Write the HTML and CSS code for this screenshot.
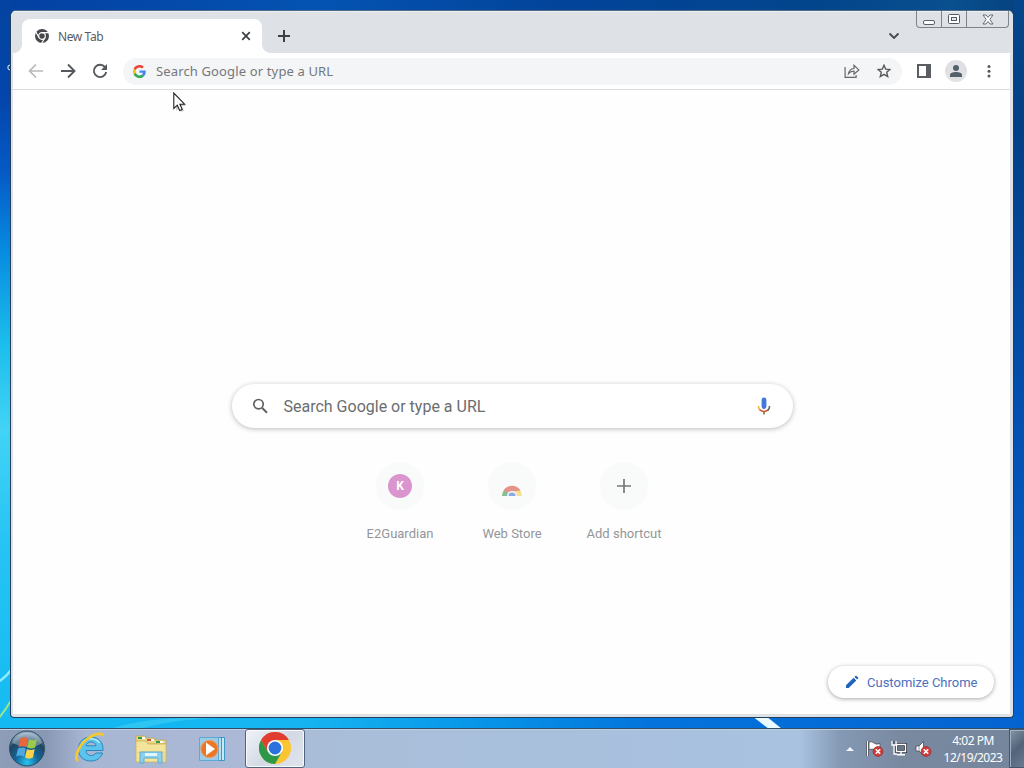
FILE: index.html
```
<!DOCTYPE html>
<html lang="en">
<head>
  <meta charset="UTF-8" />
  <title>New Tab</title>
  <link rel="stylesheet" href="styles.css">
</head>
<body>
  <div class="desktop">
    <svg class="wallpaper" width="1024" height="768" viewBox="0 0 1024 768">
      <path d="M-2 682Q5 678 12 669" fill="none" stroke="#8cecff" stroke-width="2.5" />
      <path d="M-2 719Q5 711 12 699" fill="none" stroke="#9be58a" stroke-width="2" />
      <path d="M752 716h14l16 13h-13z" fill="#eafaff" />
      <path d="M110 729q30-10 75-11h30q-45 2-75 11z" fill="#3fcdf4" opacity=".6" />
      <path d="M10 65q-3 0-2 4l2 1" fill="none" stroke="#dceaff" />
    </svg>

    <div class="window">
      <div class="tab-strip">
        <div class="tab">
          <svg width="14" height="14" viewBox="0 0 16 16">
            <circle cx="8" cy="8" r="8" fill="#45494d" />
            <circle cx="8" cy="8" r="3.8" fill="none" stroke="#fff" stroke-width="1.3" />
            <path d="M8 4.200h7.500M4.700 9.900L1 3.500M11.300 9.900L7.600 16.300" stroke="#fff" stroke-width="1.300" />
          </svg>
          <span class="tab-title">New Tab</span>
          <svg class="tab-close" width="10" height="10" viewBox="0 0 10 10">
            <path d="M1.200 1.200l7.600 7.600M8.800 1.200L1.200 8.800" stroke="#3c4043" stroke-width="1.700" />
          </svg>
        </div>
        <svg class="new-tab" width="12" height="12" viewBox="0 0 12 12">
          <path d="M6 0v12M0 6h12" stroke="#3c4043" stroke-width="2" />
        </svg>
        <svg class="tab-search" width="12" height="8" viewBox="0 0 12 8">
          <path d="M1.500 1.500L6 6l4.500-4.500" fill="none" stroke="#46494d" stroke-width="1.900" />
        </svg>
        <div class="window-controls">
          <div class="control">
            <svg width="12" height="14" viewBox="0 0 12 14"><rect x=".5" y="8.500" width="11" height="4" rx="1.500" fill="#fff" stroke="#5b6068" /></svg>
          </div>
          <div class="control">
            <svg width="12" height="12" viewBox="0 0 12 12"><rect x=".5" y="1.500" width="11" height="9" rx="1" fill="#fff" stroke="#555a62" /><rect x="3.500" y="4.500" width="5" height="3" fill="#e4e7eb" stroke="#555a62" /></svg>
          </div>
          <div class="control wide">
            <svg width="12" height="11" viewBox="0 0 12 11"><path d="M1 1h3l2 2.400L8 1h3L7.800 5.400 11 10H8L6 7.400 4 10H1l3.200-4.600z" fill="#fff" stroke="#666b73" /></svg>
          </div>
        </div>
      </div>

      <div class="toolbar">
        <svg class="nav" width="16" height="16" viewBox="0 0 16 16"><path d="M15 8H2M8 1.500L1.500 8 8 14.500" fill="none" stroke="#b7b9bc" stroke-width="1.700" /></svg>
        <svg class="nav" width="16" height="16" viewBox="0 0 16 16"><path d="M1 8h13M8 1.500L14.500 8 8 14.500" fill="none" stroke="#55585c" stroke-width="1.900" /></svg>
        <svg class="nav" width="16" height="16" viewBox="0 0 16 16"><path d="M13.300 4.500A6.200 6.200 0 1 0 14.200 9" fill="none" stroke="#55585c" stroke-width="1.900" /><path d="M15 1v6H9z" fill="#55585c" /></svg>
        <div class="omnibox">
          <svg width="13" height="13" viewBox="0 0 48 48">
            <path fill="#ea4335" d="M24 9.500c3.500 0 6.700 1.200 9.200 3.600l6.900-6.900C35.900 2.400 30.500 0 24 0 14.600 0 6.500 5.400 2.600 13.200l8 6.200C12.400 13.700 17.700 9.500 24 9.500z" />
            <path fill="#4285f4" d="M47 24.600c0-1.600-.2-3.100-.4-4.600H24v9h12.900c-.6 3-2.300 5.500-4.800 7.200l7.700 6C44.400 38 47 31.800 47 24.600z" />
            <path fill="#fbbc05" d="M10.500 28.600c-.5-1.500-.8-3-.8-4.600s.3-3.100.8-4.600l-8-6.200C.9 16.500 0 20.100 0 24s.9 7.500 2.600 10.800z" />
            <path fill="#34a853" d="M24 48c6.500 0 11.900-2.100 15.900-5.800l-7.700-6c-2.200 1.500-4.900 2.300-8.200 2.300-6.300 0-11.600-4.200-13.500-9.900l-8 6.200C6.500 42.600 14.600 48 24 48z" />
          </svg>
          <span class="omnibox-text">Search Google or type a URL</span>
          <svg class="share" width="16" height="14" viewBox="0 0 16 14">
            <path d="M1.100 3v10.300h11V11M4.500 9.700C5 6.500 6.800 4.800 10 4.500V1.300l4.800 4.600-4.800 4.300V7.100C7.500 7.100 6 7.800 4.500 9.700z" fill="none" stroke="#63666a" stroke-width="1.200" />
          </svg>
          <svg width="14" height="14" viewBox="0 0 14 14">
            <path d="M7 1.300l1.700 3.900 4.200.3-3.200 2.800 1 4.200L7 10.300l-3.700 2.200 1-4.200L1.100 5.500l4.200-.3z" fill="none" stroke="#55585c" stroke-width="1.400" />
          </svg>
        </div>
        <svg class="side-panel" width="14" height="14" viewBox="0 0 14 14"><path d="M0 0h14v14H0zM2 2v10h7V2z" fill="#5a5d61" fill-rule="evenodd" /></svg>
        <div class="avatar">
          <svg width="14" height="14" viewBox="0 0 14 14"><circle cx="7" cy="4" r="3" fill="#53616b" /><path d="M1 13v-2c0-2.200 3.500-3 6-3s6 .8 6 3v2z" fill="#53616b" /></svg>
        </div>
        <svg class="menu" width="4" height="14" viewBox="0 0 4 14"><g fill="#55585c"><circle cx="2" cy="2.500" r="1.500" /><circle cx="2" cy="7.300" r="1.500" /><circle cx="2" cy="12.100" r="1.500" /></g></svg>
      </div>

      <div class="page">
        <div class="searchbox">
          <svg width="18" height="18" viewBox="0 0 18 18"><circle cx="7.500" cy="7.200" r="4.700" fill="none" stroke="#5f6265" stroke-width="1.700" /><path d="M11 10.800l5 5" stroke="#5f6265" stroke-width="2" /></svg>
          <span class="searchbox-text">Search Google or type a URL</span>
          <svg width="14" height="20" viewBox="0 0 14 20">
            <rect x="4.600" y="1.500" width="4.800" height="11.500" rx="2.400" fill="#4478dc" />
            <path d="M1.400 10c0 2 .8 3.400 1.900 4.300" fill="none" stroke="#efb928" stroke-width="1.600" />
            <path d="M2.800 13.800c2.300 2.300 6.100 2.300 8.400 0" fill="none" stroke="#d9503f" stroke-width="1.600" />
            <path d="M10.700 14.300c1.100-.9 1.900-2.300 1.900-4.300" fill="none" stroke="#5b6b52" stroke-width="1.600" />
            <path d="M7 15.500v3" stroke="#7d7a33" stroke-width="1.600" />
          </svg>
        </div>
        <div class="shortcuts">
          <div class="shortcut">
            <div class="tile"><span class="letter">K</span></div>
            <span>E2Guardian</span>
          </div>
          <div class="shortcut">
            <div class="tile">
              <svg width="24" height="24" viewBox="0 0 24 24">
                <path d="M2 22a10 10 0 0 1 20 0z" fill="#f7df91" />
                <path d="M2 22a10 10 0 0 1 3-7l5 7z" fill="#82bf99" />
                <path d="M3.500 16.500a10 10 0 0 1 17 0L12 17.500l-5 1z" fill="#e59388" />
                <path d="M7 22a5 5 0 0 1 10 0z" fill="#f4f5fa" />
                <path d="M8.500 22a3.500 3.500 0 0 1 7 0z" fill="#89a9e8" />
              </svg>
            </div>
            <span>Web Store</span>
          </div>
          <div class="shortcut">
            <div class="tile"><svg width="14" height="14" viewBox="0 0 14 14"><path d="M7 0v14M0 7h14" stroke="#777" stroke-width="1.700" /></svg></div>
            <span>Add shortcut</span>
          </div>
        </div>
        <div class="customize">
          <svg width="14" height="14" viewBox="0 0 14 14"><path d="M1 13v-2.700L8.600 2.700l2.700 2.700L3.700 13zM9.400 1.900l1-1c.3-.3.800-.3 1.100 0l1.600 1.600c.3.300.3.800 0 1.100l-1 1z" fill="#2065bd" /></svg>
          <span>Customize Chrome</span>
        </div>
      </div>
    </div>

    <div class="taskbar">
      <svg class="start" width="38" height="38" viewBox="0 0 38 38">
        <defs>
          <radialGradient id="orb" cx=".5" cy=".9" r=".85">
            <stop offset="0" stop-color="#27c4ee" />
            <stop offset=".4" stop-color="#126497" />
            <stop offset=".75" stop-color="#214561" />
            <stop offset="1" stop-color="#8ea8bd" />
          </radialGradient>
        </defs>
        <circle cx="19" cy="18.500" r="17.500" fill="url(#orb)" stroke="#314d66" />
        <path d="M4 13a16 16 0 0 1 30 0q-7 5-15 4T4 13z" fill="#dceaf3" opacity=".38" />
        <path d="M12.500 8.500q4-2.500 7.500.2l-1.800 8.500q-3.700-2-7.800 0z" fill="#e9673a" />
        <path d="M21 9.200q4 2 8 0l-1.900 8.200q-4 2.300-7.900 0z" fill="#9bc94a" />
        <path d="M10 18.500q4-2 7.800-.1L16 26.500q-3.600-1.900-7.900 0z" fill="#4fa8df" />
        <path d="M18.900 19q3.800 2 7.800 0L25 27.500q-4 2.300-8 0z" fill="#fbd24a" />
      </svg>
      <svg class="launcher" width="32" height="32" viewBox="0 0 32 32">
        <path d="M29 18.500H12c.4 3.400 2.300 5 5.200 5 2.200 0 3.700-.8 4.700-2.500h6.700c-1.700 5-5.900 8-11.800 8C9 29 4.500 24.300 4.500 17.200 4.500 10 9.300 5 16.800 5 24.500 5 29.600 10.200 29 18.500zM12 13.800h10c-.3-2.300-2-3.800-4.900-3.800-2.800 0-4.600 1.500-5.100 3.800z" fill="#5cc3ec" stroke="#2a87bf" stroke-width="1" fill-rule="evenodd" />
        <path d="M7.500 12q3.500-5.500 10-5.300 5 .3 8 4" fill="none" stroke="#b6ecfb" stroke-width="1.500" />
        <path d="M4.500 28.500C-.5 28 3.500 15 12 8 18.500 2.800 25 .6 29.500 3" fill="none" stroke="#f4c831" stroke-width="2.700" />
      </svg>
      <svg class="launcher" width="32" height="32" viewBox="0 0 32 32">
        <path d="M1 5V3h9l1 2h8l1 2h11v4H1z" fill="#ecd982" stroke="#b9a14f" stroke-width=".7" />
        <path d="M3 4h4v2H3z" fill="#2c9a3d" /><path d="M12 6h4v2h-4z" fill="#d2553d" /><path d="M21 8h4v2h-4z" fill="#369a4b" />
        <path d="M7 4h3v2H7zM16 6h3v2h-3zM25 8h3v2h-3z" fill="#fff" />
        <path d="M1 8h10l2 3h18v18H1z" fill="#f3e39b" stroke="#c6b265" stroke-width=".8" />
        <path d="M3 20v-1h26v9" fill="none" stroke="#e3d184" />
        <path d="M5 19h22v11h-4v-5H9v5H5z" fill="#8ed0ec" stroke="#5baed4" />
        <path d="M10 20h12v3H10z" fill="#dff5fc" />
      </svg>
      <svg class="launcher" width="32" height="32" viewBox="0 0 32 32">
        <path d="M10 4.500h17.500v23H10z" fill="#c7e8f7" stroke="#3f97c4" />
        <path d="M7 4.500h17.500v23H7z" fill="#b4def2" stroke="#3f97c4" />
        <path d="M2.500 4.500h19v23h-19z" fill="#9acbe8" stroke="#5fa8cf" />
        <circle cx="12.500" cy="16" r="8.700" fill="#ec7626" stroke="#e9a36e" />
        <path d="M9 9.500l9 6.500-9 6.500z" fill="#fff" />
      </svg>
      <div class="task-active">
        <svg width="32" height="32" viewBox="0 0 32 32">
          <circle cx="16" cy="16" r="16" fill="#fbc52f" />
          <path d="M2.140 8A16 16 0 0 0 16 32L22.900 20H9.100z" fill="#2d9849" />
          <path d="M2.140 8A16 16 0 0 1 29.860 8H16v8l-6.900 4z" fill="#e13d31" />
          <circle cx="16" cy="16" r="8" fill="#fff" />
          <circle cx="16" cy="16" r="6.400" fill="#2c72de" />
        </svg>
      </div>
      <div class="tray">
        <svg width="8" height="4" viewBox="0 0 8 4"><path d="M0 4l4-4 4 4z" fill="#f2f6fa" /></svg>
        <svg width="18" height="17" viewBox="0 0 18 17">
          <path d="M1.500 1v15" stroke="#30353c" stroke-width="3" /><path d="M1.500 1v15" stroke="#fff" stroke-width="1.500" />
          <path d="M3 2q3-1 5 1t6 .5v7q-3 1-5-.5T3 9.500z" fill="#fff" stroke="#474d56" stroke-width=".8" />
          <circle cx="12" cy="11.500" r="4.900" fill="#cf3c39" stroke="#a2222a" stroke-width=".7" /><path d="M9.800 9.300l4.400 4.400M14.200 9.300l-4.400 4.400" stroke="#fff" stroke-width="1.600" />
        </svg>
        <svg width="16" height="17" viewBox="0 0 16 17">
          <path d="M5.500 4.500h9v7h-9z" fill="#66758a" stroke="#2c323a" stroke-width="3" /><path d="M5.500 4.500h9v7h-9zM10 12v2M6 14.700h8" fill="none" stroke="#fff" stroke-width="1.400" />
          <path d="M1 1v4h4V1M3 5v9h3" fill="#53606f" stroke="#fff" stroke-width="1.300" />
        </svg>
        <svg width="17" height="17" viewBox="0 0 17 17">
          <path d="M1 6h3l4.500-4.500v14L4 11H1z" fill="#fff" stroke="#454c56" stroke-width=".8" /><path d="M4 6v5" stroke="#8b94a0" />
          <circle cx="11" cy="11.500" r="4.900" fill="#cf3c39" stroke="#a2222a" stroke-width=".7" /><path d="M8.800 9.300l4.400 4.400M13.200 9.300l-4.400 4.400" stroke="#fff" stroke-width="1.600" />
        </svg>
        <div class="clock">
          <span class="time">4:02 PM</span>
          <span class="date">12/19/2023</span>
        </div>
        <div class="show-desktop"></div>
      </div>
    </div>

    <svg class="cursor" width="14" height="22" viewBox="0 0 14 22">
      <path d="M3 4l10 10H9l2 5-3 1-2-4-3 3z" fill="#777" opacity=".35" />
      <path d="M.8 1v15.500l3.500-3.300 2.400 5.300 2.500-1.100-2.300-5.200h4.700z" fill="#fff" stroke="#222" stroke-width="1.100" />
    </svg>
  </div>
</body>
</html>
```
FILE: styles.css
```
* {
  box-sizing: border-box;
}

body {
  margin: 0;
  overflow: hidden;
  font-family: Roboto, Arial, sans-serif;
}

svg {
  display: block;
  flex: none;
}

.desktop {
  position: relative;
  display: flex;
  flex-direction: column;
  width: 1024px;
  height: 768px;
  padding: 10px 10px 0;
  background:
    linear-gradient(90deg, #12b9f2 0, #16b5f1 300px, #0795e8 480px, #0474dc 650px, #0563d0 1024px) 0 717px / 1024px 12px no-repeat,
    linear-gradient(#0443a0, #0346ac 100px, #0559c5 170px, #078be0 250px, #1cbeec 345px, #42d3f5 430px, #27c4f4 540px, #15bbf2 717px) 0 0 / 11px 717px no-repeat,
    linear-gradient(#05468a, #033f86 130px, #034fae 400px, #0462d0 717px) 1013px 0 / 11px 717px no-repeat,
    linear-gradient(90deg, #0340a2, #0453b2 320px, #02449a 560px, #03458b 820px, #09508f 950px, #05417e);
}

.wallpaper {
  position: absolute;
  top: 0;
  left: 0;
}

/* Browser window */
.window {
  position: relative;
  display: flex;
  flex-direction: column;
  width: 1004px;
  height: 708px;
  padding: 0 3px 3px 2px;
  border: 1px solid #233f5c;
  border-top-color: #506a83;
  border-radius: 6px 6px 4px 4px;
  background: #dee1e6;
  overflow: hidden;
}

.tab-strip {
  display: flex;
  height: 42px;
  margin: 0 -3px 0 -2px;
  padding-left: 11px;
  background: #dee1e6;
  border-top: 1px solid #eef0f3;
}

.tab {
  position: relative;
  display: flex;
  align-items: center;
  width: 240px;
  height: 34px;
  margin-top: 7px;
  padding: 0 11px 0 13px;
  border-radius: 8px 8px 0 0;
  background: #fff;
}

/* Curved feet of the active tab */
.tab::before,
.tab::after {
  content: "";
  position: absolute;
  bottom: 0;
  width: 8px;
  height: 8px;
}

.tab::before {
  left: -8px;
  background: radial-gradient(circle at 0 0, transparent 7.5px, #fff 8px);
}

.tab::after {
  right: -8px;
  background: radial-gradient(circle at 100% 0, transparent 7.5px, #fff 8px);
}

.tab-title {
  margin-left: 9px;
  font: 12px "Noto Sans", sans-serif;
  letter-spacing: -0.4px;
  color: #5a5d61;
}

.tab-close {
  margin-left: auto;
}

.new-tab {
  margin: 18px 0 0 16px;
}

.tab-search {
  margin: 20px 16px 0 auto;
}

.window-controls {
  display: flex;
  width: 93px;
  height: 17px;
  margin: -1px 4px 0 0;
  border: 1px solid #7e848b;
  border-top: 0;
  border-radius: 0 0 4px 4px;
}

.control {
  display: flex;
  align-items: center;
  justify-content: center;
  width: 25px;
  border-right: 1px solid #7e848b;
}

.control.wide {
  width: 41px;
  border: 0;
}

.toolbar {
  display: flex;
  align-items: center;
  height: 37px;
  padding-left: 15px;
  background: #fff;
  border-bottom: 1px solid #d8dadd;
}

.nav {
  margin-right: 16px;
}

.omnibox {
  display: flex;
  align-items: center;
  width: 779px;
  height: 27px;
  margin-left: -1px;
  padding: 0 11px 0 10px;
  border-radius: 14px;
  background: #f4f5f6;
}

.omnibox-text {
  margin-left: 10px;
  font: 13px "Noto Sans", sans-serif;
  letter-spacing: 0.14px;
  color: #75787b;
}

.share {
  margin: 0 17px 0 auto;
}

.side-panel {
  margin-left: 15px;
}

.avatar {
  display: flex;
  align-items: center;
  justify-content: center;
  width: 22px;
  height: 22px;
  margin: 0 20px 0 14px;
  border-radius: 50%;
  background: #dfe1e5;
}

/* New tab page */
.page {
  position: relative;
  display: flex;
  flex: 1;
  flex-direction: column;
  align-items: center;
  padding: 294px 0 0 1px;
  background: #fefefe;
}

.searchbox {
  display: flex;
  align-items: center;
  width: 561px;
  height: 44px;
  padding: 0 22px 0 19px;
  border-radius: 22px;
  background: #fff;
  box-shadow: 0 1px 5px rgba(32, 33, 36, 0.3);
}

.searchbox-text {
  flex: 1;
  margin-left: 15px;
  font-size: 16px;
  color: #6a6d70;
}

.shortcuts {
  display: flex;
  margin-top: 34px;
}

.shortcut {
  display: flex;
  flex-direction: column;
  align-items: center;
  width: 112px;
  font-size: 13px;
  line-height: 16px;
  color: #949699;
}

.tile {
  display: flex;
  align-items: center;
  justify-content: center;
  width: 48px;
  height: 48px;
  margin-bottom: 16px;
  border-radius: 50%;
  background: #f9fafa;
}

.letter {
  width: 24px;
  height: 24px;
  border-radius: 50%;
  background: #da95cf;
  color: #fff;
  font-size: 12px;
  font-weight: bold;
  line-height: 24px;
  text-align: center;
}

.customize {
  position: absolute;
  right: 16px;
  bottom: 16px;
  display: flex;
  align-items: center;
  gap: 8px;
  width: 166px;
  height: 32px;
  padding-left: 17px;
  border-radius: 16px;
  background: #fff;
  box-shadow: 0 1px 4px rgba(0, 0, 0, 0.35);
  color: #4b6fbd;
  font-size: 13px;
  white-space: nowrap;
}

/* Taskbar */
.taskbar {
  position: relative;
  display: flex;
  align-items: center;
  height: 40px;
  margin: 10px -10px 0;
  padding-left: 8px;
  border-top: 1px solid #304d69;
  background: linear-gradient(90deg, #8e9db8, #8798b5 45px, #a7b6d2 85px, #abb9d6 240px, #a9bed9 350px, #a8c2e0 800px, #8599b4 840px, #7989a0 900px, #75869c);
  box-shadow: inset 0 1px #c0cfe0;
}

.launcher {
  margin-left: 30px;
}

.start + .launcher {
  margin: 0 -1px 2px 28px;
}

.task-active {
  display: flex;
  align-items: center;
  justify-content: center;
  width: 60px;
  height: 39px;
  padding-bottom: 1px;
  margin-left: 16px;
  border: 1px solid #51647e;
  border-radius: 3px;
  background: linear-gradient(135deg, #f0f3f8, #d4dae5 50%, #dfe4ec);
  box-shadow: inset 0 0 0 1px #f8fafc;
}

.tray {
  display: flex;
  align-items: center;
  height: 100%;
  margin-left: auto;
  gap: 8px;
}

.tray > svg:first-child {
  margin-right: 2px;
}

.tray > svg:first-child + svg {
  margin-right: -1px;
  margin-left: 2px;
}

.clock {
  display: flex;
  flex-direction: column;
  align-items: center;
  width: 60px;
  margin-left: 3px;
  font: 12px/17px "Noto Sans", sans-serif;
  letter-spacing: -0.5px;
  color: #fff;
}

.show-desktop {
  width: 15px;
  height: 39px;
  margin-left: -2px;
  border: 1px solid #46576b;
  border-right: 0;
  background: linear-gradient(135deg, #8596a9, #53647a 50%, #6a7b91);
  box-shadow: inset 1px 1px #a0afc0;
}

.cursor {
  position: absolute;
  top: 92px;
  left: 173px;
}
```
